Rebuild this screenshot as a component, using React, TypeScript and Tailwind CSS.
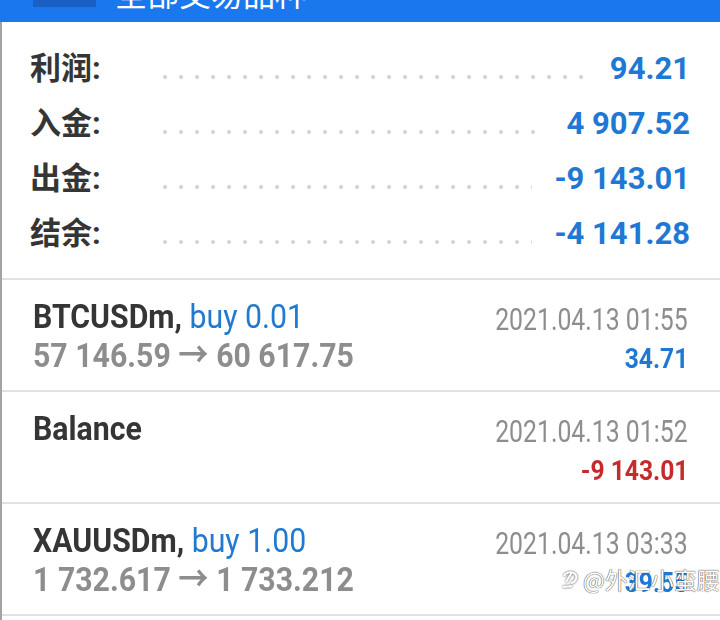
const summary = [
  { label: "利润", value: "94.21" },
  { label: "入金", value: "4 907.52" },
  { label: "出金", value: "-9 143.01" },
  { label: "结余", value: "-4 141.28" },
]

type Trade = {
  symbol: string
  side?: string
  prices?: string
  time: string
  profit: string
  negative?: boolean
}

const trades: Trade[] = [
  {
    symbol: "BTCUSDm,",
    side: "buy 0.01",
    prices: "57 146.59 → 60 617.75",
    time: "2021.04.13 01:55",
    profit: "34.71",
  },
  { symbol: "Balance", time: "2021.04.13 01:52", profit: "-9 143.01", negative: true },
  {
    symbol: "XAUUSDm,",
    side: "buy 1.00",
    prices: "1 732.617 → 1 733.212",
    time: "2021.04.13 03:33",
    profit: "39.55",
  },
]

const Dots = () => (
  <div className="flex-1 overflow-hidden mr-[22px] mt-[14px]">
    <div className="flex gap-[12px] whitespace-nowrap">
      {Array.from({ length: 40 }).map((_, i) => (
        <span key={i} className="shrink-0 w-[4px] h-[4px] rounded-full bg-[#d2d2d2]" />
      ))}
    </div>
  </div>
)

const TradeRow = ({ t }: { t: Trade }) => (
  <div className="h-[112px] border-b-2 border-[#e2e2e2] pl-[31px] pr-[32px] pt-[17px] flex justify-between">
    <div className="leading-[39px]">
      <div className="whitespace-nowrap text-[34px]">
        <span className="inline-block origin-left scale-x-[0.89] font-bold text-[#353535]">
          {t.symbol}
          {t.side && <span className="font-normal text-[#2179d0]"> {t.side}</span>}
        </span>
      </div>
      {t.prices && (
        <div className="whitespace-nowrap text-[34px] font-bold text-[#8d8d8d]">
          <span className="inline-block origin-left scale-x-[0.89]">{t.prices}</span>
        </div>
      )}
    </div>
    <div className="leading-[39px] text-right pt-[3px]">
      <div className="whitespace-nowrap text-[31px] text-[#8e8e8e]">
        <span className="inline-block origin-right scale-x-[0.8]">{t.time}</span>
      </div>
      <div
        className={`whitespace-nowrap text-[28px] font-bold ${
          t.negative ? "text-[#c62a2a]" : "text-[#1f78d3]"
        }`}
      >
        <span className="inline-block origin-right scale-x-[0.88]">{t.profit}</span>
      </div>
    </div>
  </div>
)

export default function App() {
  return (
    <div className="w-[720px] h-[620px] overflow-hidden bg-white relative font-['Roboto','Noto_Sans_CJK_SC',sans-serif]">
      {/* top bar, mostly scrolled off */}
      <div className="h-[22px] bg-[#1b77ee] overflow-hidden relative">
        <div className="flex items-start gap-[19px] pl-[33px] -mt-[24px]">
          <div className="w-[63px] h-[31px] bg-[#1a5fc4]" />
          <div className="text-[32px] leading-[32px] text-white font-['Noto_Sans_CJK_SC',sans-serif]">
            全部交易品种
          </div>
        </div>
      </div>

      <div className="border-l-2 border-[#a3a3a3] h-full">
        <div className="pt-[20px] pb-[16px] pl-[28px] pr-[30px] border-b-2 border-[#e2e2e2]">
          {summary.map((s) => (
            <div key={s.label} className="h-[55px] flex items-center">
              <div className="w-[133px] shrink-0 text-[31px] font-bold text-[#353535] whitespace-nowrap">
                {s.label}:
              </div>
              <Dots />
              <div className="text-[31px] font-bold text-[#1f78d3] whitespace-nowrap">
                {s.value}
              </div>
            </div>
          ))}
        </div>

        {trades.map((t) => (
          <TradeRow key={t.time} t={t} />
        ))}
      </div>

      {/* watermark */}
      <div className="absolute left-[561px] top-[565px] flex items-center gap-[4px] whitespace-nowrap text-white text-[23px] leading-[28px] font-['Noto_Sans_CJK_SC',sans-serif] [text-shadow:0_0_1px_#444,0_0_1px_#444]">
        <svg width="18" height="22" viewBox="0 0 18 22" fill="none" stroke="#fff" strokeWidth="2" className="[filter:drop-shadow(0_0_1px_#444)]">
          <path d="M3 8c2-4 8-5 11-2s1 8-4 9M11 4l-6 10M2 19c3-1 6 0 9-1" />
        </svg>
        <span>@外汇小蛮腰</span>
      </div>
    </div>
  )
}
